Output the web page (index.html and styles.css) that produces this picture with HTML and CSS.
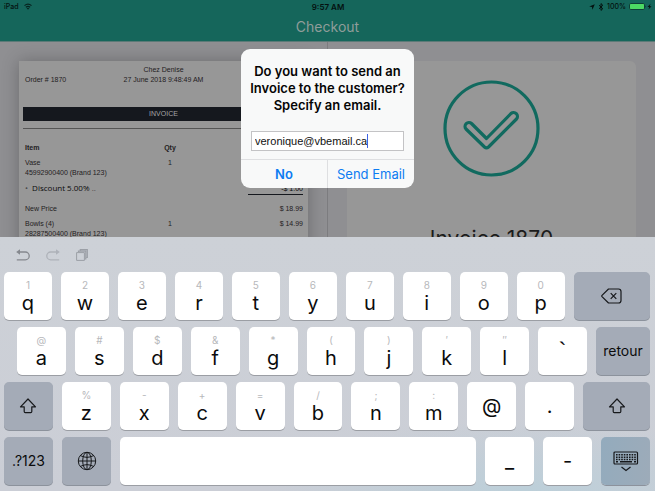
FILE: index.html
```html
<!DOCTYPE html>
<html lang="en">
<head>
    <meta charset="UTF-8">
    <meta name="viewport" content="width=device-width, initial-scale=1.0">
    <title>Checkout</title>
    <link rel="stylesheet" href="styles.css">
</head>
<body>
    <div class="stage">
        <header class="topbar">
            <div class="status">
                <div class="status-left">
                    <span>iPad</span>
                    <svg width="8" height="7" viewBox="0 0 8 7" fill="none" stroke="#07231f">
                        <path d="M0.5 2.6Q4 -0.4 7.500 2.600M1.900 4.200Q4 2.500 6.100 4.200" stroke-width="1.2"/>
                        <path d="M4 6.700L2.700 5.300Q4 4.400 5.300 5.300Z" fill="#07231f" stroke="none"/>
                    </svg>
                </div>
                <div class="status-time">9:57 AM</div>
                <div class="status-right">
                    <svg width="6" height="6" viewBox="0 0 6 6"><path d="M5.800 0.200L3.400 5.800L3 3L0.200 2.600Z" fill="#04110f"/></svg>
                    <svg width="6" height="8" viewBox="0 0 6 8"><path d="M1 2.200L4.800 5.700L3 7.400V0.600L4.800 2.300L1 5.800" fill="none" stroke="#04110f"/></svg>
                    <span>100%</span>
                    <svg width="23" height="7" viewBox="0 0 23 7">
                        <rect x="0.500" y="0.500" width="15" height="6" rx="1.300" fill="#4cd964" stroke="#0d3f38"/>
                        <path d="M16.500 2.300Q17.600 3.500 16.500 4.700Z" fill="#07231f"/>
                        <path d="M21.500 0.800L18.500 4H20.300L19.500 6.400L22.500 3.200H20.700Z" fill="#04110f"/>
                    </svg>
                </div>
            </div>
            <h1>Checkout</h1>
        </header>

        <main class="content">
            <section class="pane pane-receipt">
                <div class="receipt">
                    <div class="store">Chez Denise</div>
                    <div class="order">
                        <span>Order # 1870</span>
                        <span>27 June 2018 9:48:49 AM</span>
                    </div>
                    <h2>INVOICE</h2>
                    <table>
                        <thead>
                            <tr><th>Item</th><th class="qty">Qty</th><th class="price"></th></tr>
                        </thead>
                        <tbody>
                            <tr><td>Vase<br>45992900400 (Brand 123)</td><td class="qty">1</td><td class="price"></td></tr>
                            <tr class="discount"><td><span class="dot">•</span> Discount 5.00% <span class="dot">..</span></td><td></td><td class="price"><span class="minus">-$ 1.00</span></td></tr>
                            <tr><td>New Price</td><td></td><td class="price">$ 18.99</td></tr>
                            <tr><td>Bowls (4)<br>28287500400 (Brand 123)</td><td class="qty">1</td><td class="price">$ 14.99</td></tr>
                        </tbody>
                    </table>
                </div>
            </section>
            <section class="pane pane-done">
                <div class="done">
                    <svg width="97" height="97" viewBox="0 0 97 97" fill="none" stroke="#116a5f" stroke-width="3.200" stroke-linejoin="round">
                        <circle cx="48.500" cy="48.500" r="46.500"/>
                        <path d="M43.500 58.500L28.500 43.500A3.900 3.900 0 0 0 23 49L41.500 67Q43.500 68.800 45.500 67L73.500 39A3.900 3.900 0 0 0 68 33.500Z"/>
                    </svg>
                    <h2>Invoice 1870</h2>
                </div>
            </section>
        </main>

        <div class="overlay">
            <form class="dialog" role="dialog" aria-labelledby="dialogTitle">
                <label id="dialogTitle" for="email">Do you want to send an Invoice to the customer? Specify an email.</label>
                <div class="field">
                    <input type="text" id="email" name="email" value="veronique@vbemail.ca">
                    <span class="caret"></span>
                </div>
                <div class="actions">
                    <button type="button" class="no">No</button>
                    <button type="button">Send Email</button>
                </div>
            </form>
        </div>
    </div>

    <div class="keyboard">
        <div class="tools">
            <button type="button" aria-label="Undo">
                <svg width="14" height="12" viewBox="0 0 14 12"><path d="M2 3H9.300A3.900 3.900 0 0 1 9.300 10.800H0.800" fill="none" stroke="#85888e" stroke-width="1.300"/><path d="M0.200 3L4 0.200V5.800Z" fill="#85888e"/></svg>
            </button>
            <button type="button" aria-label="Redo">
                <svg width="14" height="12" viewBox="0 0 14 12"><path d="M12 3H4.700A3.900 3.900 0 0 0 4.700 10.800H13.200" fill="none" stroke="#aeb2b9" stroke-width="1.300"/><path d="M13.800 3L10 0.200V5.800Z" fill="#aeb2b9"/></svg>
            </button>
            <button type="button" aria-label="Paste">
                <svg width="12" height="12" viewBox="0 0 12 12" fill="none" stroke="#9b9fa6"><path d="M0.600 3.600H8.400V11.400H0.600Z"/><path d="M2.500 3V2.200H9.800V10H9M4.300 1.500V0.700H11.300V8.500H10.500" stroke-width="1.200"/></svg>
            </button>
        </div>
        <div class="row">
            <button type="button" class="key"><small>1</small>q</button>
            <button type="button" class="key"><small>2</small>w</button>
            <button type="button" class="key"><small>3</small>e</button>
            <button type="button" class="key"><small>4</small>r</button>
            <button type="button" class="key"><small>5</small>t</button>
            <button type="button" class="key"><small>6</small>y</button>
            <button type="button" class="key"><small>7</small>u</button>
            <button type="button" class="key"><small>8</small>i</button>
            <button type="button" class="key"><small>9</small>o</button>
            <button type="button" class="key"><small>0</small>p</button>
            <button type="button" class="key dark backspace" aria-label="Delete">
                <svg width="21" height="16" viewBox="0 0 21 16" fill="none" stroke="#16181b" stroke-width="1.200"><path d="M7.500 1H17.500Q20 1 20 3.500V12.500Q20 15 17.500 15H7.500L1 8.600Q0.500 8 1 7.400Z" stroke-linejoin="round"/><path d="M9.700 5.200L15.300 10.800M15.300 5.200L9.700 10.800"/></svg>
            </button>
        </div>
        <div class="row indent">
            <button type="button" class="key"><small>@</small>a</button>
            <button type="button" class="key"><small>#</small>s</button>
            <button type="button" class="key"><small>$</small>d</button>
            <button type="button" class="key"><small>&amp;</small>f</button>
            <button type="button" class="key"><small>*</small>g</button>
            <button type="button" class="key"><small>(</small>h</button>
            <button type="button" class="key"><small>)</small>j</button>
            <button type="button" class="key"><small>′</small>k</button>
            <button type="button" class="key"><small>″</small>l</button>
            <button type="button" class="key single mark">`</button>
            <button type="button" class="key dark return">retour</button>
        </div>
        <div class="row">
            <button type="button" class="key dark" aria-label="Shift">
                <svg width="18" height="16" viewBox="0 0 18 16"><path d="M9 1L1.500 8.800H5.200V13.500Q5.200 14.600 6.300 14.600H11.700Q12.800 14.600 12.800 13.500V8.800H16.500Z" fill="none" stroke="#16181b" stroke-width="1.200" stroke-linejoin="round"/></svg>
            </button>
            <button type="button" class="key"><small>%</small>z</button>
            <button type="button" class="key"><small>-</small>x</button>
            <button type="button" class="key"><small>+</small>c</button>
            <button type="button" class="key"><small>=</small>v</button>
            <button type="button" class="key"><small>/</small>b</button>
            <button type="button" class="key"><small>;</small>n</button>
            <button type="button" class="key"><small>:</small>m</button>
            <button type="button" class="key single">@</button>
            <button type="button" class="key single">.</button>
            <button type="button" class="key dark shift-right" aria-label="Shift">
                <svg width="18" height="16" viewBox="0 0 18 16"><path d="M9 1L1.500 8.800H5.200V13.500Q5.200 14.600 6.300 14.600H11.700Q12.800 14.600 12.800 13.500V8.800H16.500Z" fill="none" stroke="#16181b" stroke-width="1.200" stroke-linejoin="round"/></svg>
            </button>
        </div>
        <div class="row">
            <button type="button" class="key dark">.?123</button>
            <button type="button" class="key dark" aria-label="Next keyboard">
                <svg width="20" height="20" viewBox="0 0 20 20" fill="none" stroke="#16181b"><circle cx="10" cy="10" r="8.700"/><ellipse cx="10" cy="10" rx="4.300" ry="8.700"/><path d="M10 1.300V18.700M1.300 10H18.700M3.300 4.500Q10 8.200 16.700 4.500M3.300 15.500Q10 11.800 16.700 15.500"/></svg>
            </button>
            <button type="button" class="key space" aria-label="Space"></button>
            <button type="button" class="key single">_</button>
            <button type="button" class="key single">-</button>
            <button type="button" class="key dark hide" aria-label="Hide keyboard">
                <svg width="26" height="21" viewBox="0 0 26 21" fill="none" stroke="#16181b">
                    <rect x="1" y="1" width="23.500" height="12" rx="1" stroke-width="1.200"/>
                    <path d="M3 3.700H23M3 6.200H23M3 8.500H23" stroke-width="1.500" stroke-dasharray="1.600 1"/>
                    <path d="M3 10.700H5M7 10.700H19M21 10.700H23" stroke-width="1.500"/>
                    <path d="M8.500 16L13 19.500L17.500 16" stroke-width="1.200"/>
                </svg>
            </button>
        </div>
    </div>
</body>
</html>
```
FILE: styles.css
```css
* {
    box-sizing: border-box;
}
body {
    margin: 0;
    height: 100vh;
    display: flex;
    flex-direction: column;
    font-family: Inter, "Liberation Sans", sans-serif;
    overflow: hidden;
}
button {
    border: none;
    padding: 0;
    background: none;
    font-family: inherit;
    cursor: pointer;
}
svg {
    display: block;
}
h1, h2 {
    margin: 0;
    font-weight: normal;
}
.stage {
    flex: 1;
    min-height: 0;
    display: flex;
    flex-direction: column;
    position: relative;
    overflow: hidden;
    background-color: #8f8f92;
}

/* Top bar */
.topbar {
    flex: none;
    background-color: #15665b;
    border-bottom: 1px solid #5b7a77;
}
.status {
    display: grid;
    grid-template-columns: 1fr auto 1fr;
    align-items: center;
    height: 13px;
    padding: 0 3px 0 4px;
    font-size: 7px;
    font-weight: 500;
    color: #04110f;
}
.status-left, .status-right {
    display: flex;
    align-items: center;
    gap: 5px;
}
.status-right {
    justify-content: flex-end;
    gap: 3px;
}
.status-time {
    font-size: 8px;
    font-weight: 600;
}
.topbar h1 {
    height: 28px;
    line-height: 28px;
    font-size: 14px;
    text-align: center;
    color: #8f9d9a;
}

/* Page behind the dialog */
.content {
    flex: 1;
    min-height: 0;
    display: flex;
}
.pane {
    flex: 1;
    padding: 19px 19px 0;
    overflow: hidden;
}
.pane-receipt {
    border-right: 1px solid #7c7c7f;
}
.receipt {
    height: 300px;
    padding: 4px 4px 0;
    background-color: #979797;
    box-shadow: 0 0 16px rgba(0, 0, 0, 0.25);
    font-family: "Liberation Sans", Arial, sans-serif;
    font-size: 7px;
    line-height: 10px;
    color: #1f2022;
}
.store {
    text-align: center;
}
.order {
    display: grid;
    grid-template-columns: 1fr auto 1fr;
    padding: 0 2px;
}
.receipt h2 {
    margin-top: 22px;
    height: 14px;
    line-height: 14px;
    font-size: 7px;
    text-align: center;
    color: #a5a5a5;
    background-color: #15181e;
}
.receipt table {
    width: 100%;
    margin-top: 7px;
    padding-top: 14px;
    border-top: 1px solid #555;
    border-spacing: 0;
    table-layout: fixed;
}
.receipt th, .receipt td {
    padding: 0 0 5px 2px;
    text-align: left;
    vertical-align: top;
}
.receipt .qty {
    width: 50px;
    padding-left: 0;
    text-align: center;
}
.receipt .price {
    width: 109px;
    padding-right: 1px;
    text-align: right;
}
.receipt .discount td {
    padding-bottom: 9px;
    font-family: "Open Sans", sans-serif;
    font-size: 8px;
    color: #0b0b0c;
}
.receipt .dot {
    color: #4b4b4d;
    margin-right: 2px;
}
.receipt .minus {
    display: inline-block;
    width: 55px;
    border-bottom: 1px solid #15181e;
    font-family: "Liberation Sans", Arial, sans-serif;
    font-size: 7px;
}
.done {
    display: flex;
    flex-direction: column;
    align-items: center;
    height: 300px;
    padding-top: 19px;
    border-radius: 6px;
    background-color: #979797;
}
.done h2 {
    margin-top: 48px;
    font-size: 21px;
    line-height: 28px;
    color: #1c1c1c;
}

/* Dialog */
.overlay {
    position: absolute;
    inset: 0;
    display: flex;
    justify-content: center;
    align-items: flex-start;
    padding-top: 49px;
}
.dialog {
    width: 173px;
    padding-top: 14px;
    border-radius: 9px;
    background-color: #f8f9f9;
    overflow: hidden;
}
.dialog label {
    display: block;
    padding: 0 8px;
    font-size: 13px;
    font-weight: 600;
    line-height: 17px;
    text-align: center;
    color: #050505;
}
.field {
    display: flex;
    align-items: center;
    margin: 17px 10px 8px;
    height: 20px;
    padding-left: 3px;
    border: 1px solid #c3c3c5;
    background-color: #fff;
}
.field input {
    field-sizing: content;
    padding: 0;
    border: none;
    outline: none;
    background: none;
    font-family: "Liberation Sans", Arial, sans-serif;
    font-size: 11px;
    color: #111;
}
.caret {
    width: 1px;
    height: 14px;
    background-color: #3d62e6;
}
.actions {
    display: flex;
    border-top: 1px solid #dedfe1;
}
.actions button {
    flex: 1;
    height: 28px;
    font-size: 13px;
    color: #0c7cf2;
}
.actions .no {
    border-right: 1px solid #dedfe1;
    font-weight: 600;
}

/* Keyboard */
.keyboard {
    flex: none;
    display: flex;
    flex-direction: column;
    gap: 7px;
    padding: 0 5px 6px 4px;
    background: radial-gradient(ellipse 260px 70px at 80% 100%, #bccfd9, rgba(188, 207, 217, 0)), linear-gradient(#cdd1d7, #cbced6);
}
.tools {
    display: flex;
    align-items: center;
    gap: 16px;
    height: 28px;
    padding: 7px 0 0 12px;
}
.row {
    display: flex;
    gap: 9px;
}
.row.indent {
    padding-left: 13px;
}
.key {
    flex: 49 1 0;
    min-width: 0;
    height: 48px;
    display: flex;
    flex-direction: column;
    align-items: center;
    justify-content: center;
    border-radius: 5px;
    background-color: #fff;
    box-shadow: 0 1px 0 #9b9ea4;
    font-size: 20px;
    line-height: 22px;
    color: #0b0b0c;
}
.key small {
    font-size: 10px;
    line-height: 14px;
    color: #b7b8bb;
}
.key.single {
    font-size: 20px;
}
.key.mark {
    font-family: "Liberation Sans", Arial, sans-serif;
    font-size: 24px;
}
.key.dark {
    background-color: #a4abb7;
    box-shadow: 0 1px 0 #8c929c;
    font-size: 14px;
}
.key.backspace {
    flex-grow: 78;
}
.key.return {
    flex-grow: 54;
}
.key.shift-right {
    flex-grow: 67;
}
.key.space {
    flex-grow: 356;
}
.key.hide {
    background: linear-gradient(100deg, #93abbd, #9dabb9);
}
```
